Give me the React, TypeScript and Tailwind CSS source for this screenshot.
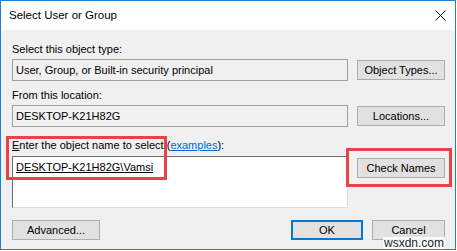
import React from "react";

function Btn({ label, w, primary }: { label: string; w: string; primary?: boolean }) {
  return (
    <div
      className={`${w} h-[20px] flex items-center justify-center bg-[#e1e1e1] text-black leading-[12px] ${
        primary ? "border-2 border-[#0078d7]" : "border border-[#adadad]"
      }`}
    >
      {label}
    </div>
  );
}

export default function App() {
  return (
    <div className="w-[457px] h-[251px] bg-white" style={{ fontFamily: '"Liberation Sans", Arial, sans-serif' }}>
      <div className="relative w-[456px] h-[250px] border border-[#1b80d6] bg-[#f0f0f0] flex flex-col text-[11px] text-black">
        {/* title bar */}
        <div className="h-[29px] bg-white flex items-center justify-between pl-[8px] pr-[8px] shrink-0">
          <span className="text-[11.5px] pt-[1px]">Select User or Group</span>
          <svg width="11" height="11" viewBox="0 0 11 11" className="mr-[1px]">
            <path d="M0.5 0.5 L10.5 10.5 M10.5 0.5 L0.5 10.5" stroke="#111" strokeWidth="1" />
          </svg>
        </div>

        <div className="flex flex-col pl-[11px] pr-[10px] pt-[13px]">
          <div className="leading-[13px]">Select this object type:</div>
          <div className="flex items-center justify-between mt-[3px]">
            <div className="w-[336px] h-[22px] border border-[#a0a0a0] bg-[#f0f0f0] flex items-center pl-[3px]">
              User, Group, or Built-in security principal
            </div>
            <Btn label="Object Types..." w="w-[88px]" />
          </div>

          <div className="leading-[13px] mt-[8px]">From this location:</div>
          <div className="flex items-center justify-between mt-[3px]">
            <div className="w-[336px] h-[22px] border border-[#a0a0a0] bg-[#f0f0f0] flex items-center pl-[3px]">
              DESKTOP-K21H82G
            </div>
            <Btn label="Locations..." w="w-[88px]" />
          </div>

          <div className="leading-[13px] mt-[12px]">
            <span className="underline">E</span>nter the object name to select (
            <span className="underline text-[#0066cc]">examples</span>):
          </div>
          <div className="flex items-start justify-between mt-[4px]">
            <div className="w-[336px] h-[52px] bg-white border-t border-l border-[#6d6d6d] border-r-[#dcdcdc] border-b-[#dcdcdc] border-r border-b pl-[3px] pt-[2px]">
              <span className="underline">DESKTOP-K21H82G\Vamsi</span>
            </div>
            <div className="mt-[2px]">
              <Btn label="Check Names" w="w-[88px]" />
            </div>
          </div>

          <div className="flex items-center mt-[12px]">
            <Btn label="Advanced..." w="w-[88px]" />
            <div className="ml-auto flex gap-[9px]">
              <Btn label="OK" w="w-[72px]" primary />
              <Btn label="Cancel" w="w-[73px]" />
            </div>
          </div>
        </div>

        {/* annotations */}
        <div className="absolute left-[5px] top-[135px] w-[161px] h-[44px] border-[3px] border-[#e6434b]" />
        <div className="absolute left-[345px] top-[147px] w-[106px] h-[39px] border-[3px] border-[#e6434b]" />
        <div className="absolute left-[382px] top-[236px] px-[1px] bg-white/85 text-[12px] leading-[12px] text-[#222]">
          wsxdn.com
        </div>
      </div>
    </div>
  );
}
